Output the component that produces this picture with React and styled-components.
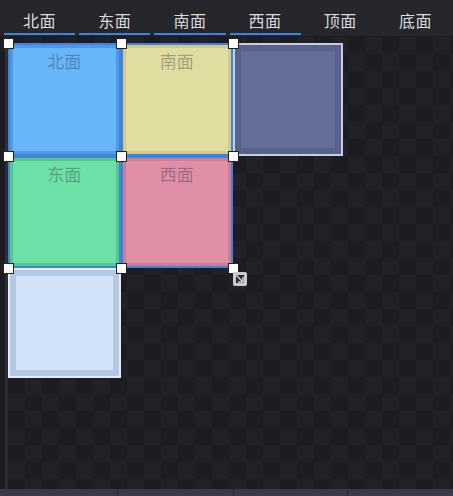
import styled, { createGlobalStyle } from 'styled-components';

const GlobalStyle = createGlobalStyle`
  html, body {
    margin: 0;
    padding: 0;
    background: #1e1f25;
    font-family: "Noto Sans CJK SC", "Noto Sans", sans-serif;
  }
`;

const Screen = styled.div`
  width: 453px;
  height: 496px;
  display: flex;
  flex-direction: column;
  overflow: hidden;
  background: #1e1f25;
`;

const TabBar = styled.div`
  height: 37px;
  display: flex;
  padding-left: 2px;
  background: #26272d;
  border-bottom: 1px solid #1a1b20;
  box-sizing: border-box;
`;

const Tab = styled.div`
  width: 76px;
  display: flex;
  flex-direction: column;
  align-items: center;
  justify-content: space-between;
  font-size: 16px;
  color: #dcdcdc;
  padding-top: 8px;
  box-sizing: border-box;
  letter-spacing: 0.5px;

  &::after {
    content: '';
    align-self: stretch;
    margin: 0 2px 1px;
    height: 2px;
    background: ${(p) => (p.$active ? '#3b82dd' : 'transparent')};
  }
`;

const Body = styled.div`
  flex: 1;
  display: flex;
  min-height: 0;
`;

const SideStrip = styled.div`
  width: 8px;
  background: linear-gradient(to right, #1c1d22 0 5px, #2c2d35 5px 8px);
`;

const Canvas = styled.div`
  position: relative;
  flex: 1;
  padding-top: 6px;
  background-color: #1e1f25;
  background-image: conic-gradient(
    #212228 0 25%,
    #1c1d22 0 50%,
    #212228 0 75%,
    #1c1d22 0
  );
  background-size: 34px 34px;
`;

const TileGrid = styled.div`
  display: grid;
  grid-template-columns: repeat(2, 112.5px) 110px;
  grid-template-rows: repeat(2, 112.5px) 110px;
`;

const Tile = styled.div`
  grid-column: ${(p) => p.$col};
  grid-row: ${(p) => p.$row};
  box-sizing: border-box;
  background: ${(p) => p.$fill};
  border: 2px solid ${(p) => (p.$selected ? '#3f84dc' : p.$edge)};
  box-shadow: inset 0 0 0 ${(p) => (p.$selected ? 3 : 6)}px
    ${(p) => p.$band};
  display: flex;
  justify-content: center;
  padding-top: 3px;
  font-size: 17px;
  color: rgba(40, 40, 50, 0.35);
`;

const Selection = styled.div`
  position: absolute;
  left: 0;
  top: 6px;
  width: 225px;
  height: 225px;
  pointer-events: none;
`;

const Handle = styled.div`
  position: absolute;
  left: ${(p) => p.$x}px;
  top: ${(p) => p.$y}px;
  width: 11px;
  height: 11px;
  margin: -5px 0 0 -5px;
  background: #ffffff;
  border: 1px solid #222;
  box-sizing: border-box;
`;

const ResizeIcon = styled.svg`
  position: absolute;
  left: 224px;
  top: 228px;
`;

const BottomBar = styled.div`
  height: 7px;
  display: grid;
  grid-template-columns: 117px 115px 113px 1fr;
  gap: 1px;
  background: #25262d;
`;

const BarSegment = styled.div`
  background: #393a44;
`;

const tabs = ['北面', '东面', '南面', '西面', '顶面', '底面'];

const tiles = [
  { col: 1, row: 1, label: '北面', fill: '#68b6fa', band: '#4f9ae6', selected: true },
  { col: 2, row: 1, label: '南面', fill: '#e1dc9f', band: '#d4c88a', selected: true },
  { col: 3, row: 1, label: '', fill: '#646e9b', band: '#59628b', edge: '#c9cde0' },
  { col: 1, row: 2, label: '东面', fill: '#6de0a7', band: '#54c78e', selected: true },
  { col: 2, row: 2, label: '西面', fill: '#e08fa7', band: '#cf7f95', selected: true },
  { col: 1, row: 3, label: '', fill: '#d3e2fb', band: '#b4c7e3', edge: '#e4ebf7' },
];

const handles = [0, 112.5, 225].flatMap((y) =>
  [0, 112.5, 225].map((x) => ({ x, y }))
);

export default function App() {
  return (
    <Screen>
      <GlobalStyle />
      <TabBar>
        {tabs.map((t, i) => (
          <Tab key={t} $active={i < 4}>
            {t}
          </Tab>
        ))}
      </TabBar>
      <Body>
        <SideStrip />
        <Canvas>
          <TileGrid>
            {tiles.map((t) => (
              <Tile
                key={`${t.col}-${t.row}`}
                $col={t.col}
                $row={t.row}
                $fill={t.fill}
                $band={t.band}
                $edge={t.edge}
                $selected={t.selected}
              >
                {t.label}
              </Tile>
            ))}
          </TileGrid>
          <Selection>
            {handles.map((h) => (
              <Handle key={`${h.x}-${h.y}`} $x={h.x} $y={h.y} />
            ))}
            <ResizeIcon width="16" height="16" viewBox="0 0 16 16">
              <rect x="1" y="1" width="14" height="14" rx="2" fill="#c9cad0" />
              <rect x="4" y="4" width="8" height="8" fill="#2a2b31" />
              <path d="M4 4 L10 10 M11 6 V11 H6" stroke="#c9cad0" strokeWidth="1.6" fill="none" />
            </ResizeIcon>
          </Selection>
        </Canvas>
      </Body>
      <BottomBar>
        <BarSegment />
        <BarSegment />
        <BarSegment />
        <BarSegment />
      </BottomBar>
    </Screen>
  );
}
